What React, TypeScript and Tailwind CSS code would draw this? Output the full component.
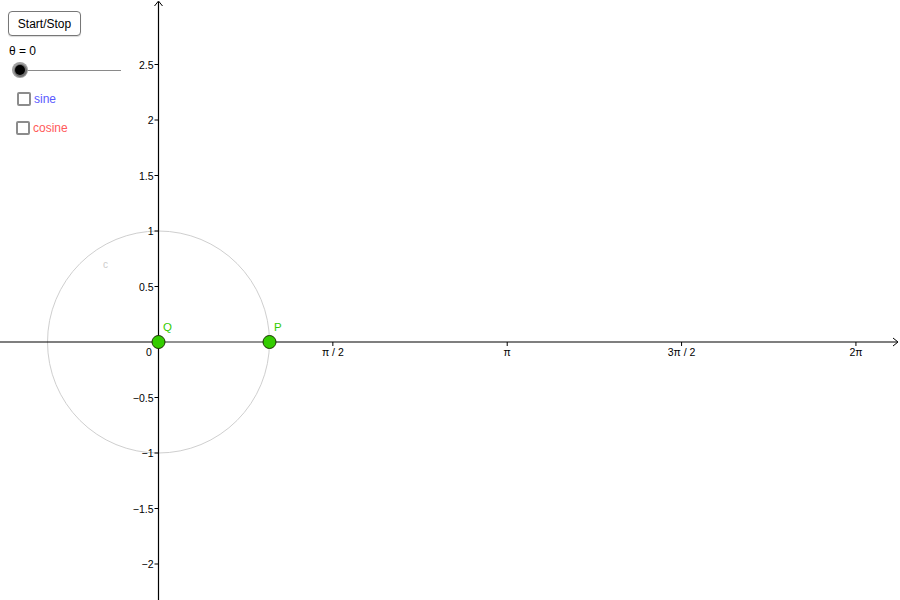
import { useState } from "react";

const OX = 158.5;
const OY = 342;
const U = 111;

const yTicks = [2.5, 2, 1.5, 1, 0.5, -0.5, -1, -1.5, -2];
const xTicks = [
  { v: Math.PI / 2, label: "π / 2" },
  { v: Math.PI, label: "π" },
  { v: (3 * Math.PI) / 2, label: "3π / 2" },
  { v: 2 * Math.PI, label: "2π" },
];

function fmt(n: number) {
  return n < 0 ? "\u2212" + Math.abs(n) : String(n);
}

function Graph() {
  return (
    <svg width={900} height={600} className="absolute inset-0" style={{ fontFamily: "'Liberation Sans', Arial, sans-serif" }}>
      {/* circle c */}
      <circle cx={OX} cy={OY} r={U} fill="none" stroke="#cfcfcf" strokeWidth={1} />
      <text x={103} y={268} fontSize={10} fill="#cccccc">c</text>

      {/* axes */}
      <line x1={0} y1={OY} x2={897} y2={OY} stroke="#000" strokeWidth={1.2} />
      <path d="M893 338 L898 342 L893 346" fill="none" stroke="#000" strokeWidth={1} />
      <line x1={OX} y1={2} x2={OX} y2={600} stroke="#000" strokeWidth={1.2} />
      <path d="M154.5 6 L158.5 1 L162.5 6" fill="none" stroke="#000" strokeWidth={1} />

      {yTicks.map((t) => {
        const y = OY - t * U;
        return (
          <g key={t}>
            <line x1={OX - 4} y1={y} x2={OX} y2={y} stroke="#000" strokeWidth={1} />
            <text x={OX - 5} y={y + 4} fontSize={10.5} textAnchor="end" fill="#000">
              {fmt(t)}
            </text>
          </g>
        );
      })}

      {xTicks.map((t) => {
        const x = OX + t.v * U;
        return (
          <g key={t.label}>
            <line x1={x} y1={OY} x2={x} y2={OY + 4} stroke="#000" strokeWidth={1} />
            <text x={x} y={OY + 14} fontSize={10.5} textAnchor="middle" fill="#000">
              {t.label}
            </text>
          </g>
        );
      })}
      <text x={149} y={OY + 14} fontSize={10.5} textAnchor="middle" fill="#000">0</text>

      {/* segment QP */}
      <line x1={OX} y1={OY} x2={OX + U} y2={OY} stroke="#999" strokeWidth={1.5} />

      {/* points */}
      <circle cx={OX} cy={OY} r={6.5} fill="#33cc00" stroke="#1a3300" strokeWidth={1} />
      <circle cx={OX + U} cy={OY} r={6.5} fill="#33cc00" stroke="#1a3300" strokeWidth={1} />
      <text x={163} y={331} fontSize={11.5} fill="#33cc00">Q</text>
      <text x={274} y={331} fontSize={11.5} fill="#33cc00">P</text>
    </svg>
  );
}

export default function App() {
  const [sine, setSine] = useState(false);
  const [cosine, setCosine] = useState(false);

  return (
    <div className="relative w-[900px] h-[600px] bg-white overflow-hidden" style={{ fontFamily: "'Liberation Sans', Arial, sans-serif" }}>
      <Graph />

      <div className="absolute left-0 top-0 flex flex-col pl-2 pt-[11px]">
        <button className="w-[73px] h-[25px] border border-[#777] rounded-[4px] bg-white text-[12px] text-black shadow-[0_1px_1px_rgba(0,0,0,0.15)]">
          Start/Stop
        </button>

        <div className="mt-[8px] ml-px text-[12px] leading-[14px] text-black">θ = 0</div>

        <div className="relative mt-[4px] h-[16px] w-[113px]">
          <div className="absolute left-[12px] right-0 top-[7.5px] h-px bg-[#8a8a8a]" />
          <div className="absolute left-[4px] top-0 w-[16px] h-[16px] rounded-full bg-[#a0a0a0] flex items-center justify-center">
            <div className="w-[13px] h-[13px] rounded-full bg-[#6f6f6f] flex items-center justify-center">
              <div className="w-[10px] h-[10px] rounded-full bg-black" />
            </div>
          </div>
        </div>

        <label className="mt-[12px] ml-[9px] flex items-center gap-[3px] cursor-pointer" onClick={() => setSine(!sine)}>
          <span className="w-[14px] h-[14px] border-2 border-[#8c8c8c] rounded-[2px] bg-white" />
          <span className="text-[12px] text-[#5a5aff]">sine</span>
        </label>

        <label className="mt-[11px] ml-[8px] flex items-center gap-[3px] cursor-pointer" onClick={() => setCosine(!cosine)}>
          <span className="w-[14px] h-[14px] border-2 border-[#8c8c8c] rounded-[2px] bg-white" />
          <span className="text-[12px] text-[#ff5a5a]">cosine</span>
        </label>
      </div>
    </div>
  );
}
